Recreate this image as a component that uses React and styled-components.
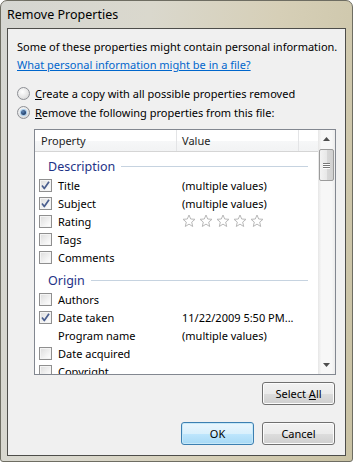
import React from 'react';
import styled, { createGlobalStyle } from 'styled-components';

const Global = createGlobalStyle`
  html, body {
    margin: 0;
    background: #ffffff;
  }
  body {
    font-family: "Noto Sans", "Open Sans", sans-serif;
    font-size: 11px;
    color: #000;
  }
`;

const Frame = styled.div`
  width: 353px;
  height: 462px;
  box-sizing: border-box;
  display: flex;
  flex-direction: column;
  padding: 0 6px 5px 6px;
  border: 1px solid #6e6d62;
  border-radius: 7px 7px 3px 3px;
  background: linear-gradient(100deg, #d5d6d2 0%, #dad8cd 35%, #d6cfb7 65%, #c9c2a4 100%);
`;

const TitleBar = styled.div`
  height: 27px;
  display: flex;
  align-items: center;
  font-size: 12.5px;
  padding-bottom: 1px;
  box-sizing: border-box;
`;

const Client = styled.div`
  flex: 1;
  border: 1px solid #4d4d4a;
  background: #f0f0f0;
  padding: 9px 9px 0 9px;
  display: flex;
  flex-direction: column;
`;

const Line = styled.div`
  line-height: 18px;
  white-space: nowrap;
`;

const Link = styled.a`
  color: #0066cc;
  text-decoration: underline;
  line-height: 18px;
  white-space: nowrap;
`;

const RadioGroup = styled.div`
  margin-top: 10px;
  display: flex;
  flex-direction: column;
`;

const RadioRow = styled.label`
  height: 19px;
  display: flex;
  align-items: center;
  gap: 5px;
  white-space: nowrap;
`;

const RadioCircle = styled.span`
  width: 13px;
  height: 13px;
  box-sizing: border-box;
  border-radius: 50%;
  border: 1px solid #8d8f94;
  background: radial-gradient(circle at 40% 35%, #ffffff 0%, #e6e6e6 55%, #cfcfcf 100%);
  display: flex;
  align-items: center;
  justify-content: center;
  &::after {
    content: '';
    display: ${(p) => (p.checked ? 'block' : 'none')};
    width: 5px;
    height: 5px;
    border-radius: 50%;
    background: radial-gradient(circle at 40% 35%, #5d86b6 0%, #1d3d6a 70%);
    box-shadow: 0 0 1px 1px #9cc6ea;
  }
`;

const U = styled.span`
  text-decoration: underline;
`;

const ListBox = styled.div`
  margin: 7px 0 0 17px;
  width: 302px;
  height: 246px;
  box-sizing: border-box;
  border: 1px solid #828790;
  background: #fff;
  display: flex;
  overflow: hidden;
`;

const ListMain = styled.div`
  flex: 1;
  display: flex;
  flex-direction: column;
  overflow: hidden;
`;

const Header = styled.div`
  height: 21px;
  flex: none;
  display: grid;
  grid-template-columns: 142px 122px 1fr;
  background: linear-gradient(#ffffff, #ffffff 50%, #f6f7f8 51%, #f2f3f4);
  border-bottom: 1px solid #d5d5d5;
`;

const HeaderCell = styled.div`
  display: flex;
  align-items: center;
  padding-left: ${(p) => p.pad}px;
  border-right: ${(p) => (p.last ? 'none' : '1px solid #e3e4e6')};
  color: #1e1e1e;
`;

const Group = styled.div`
  margin-top: 4px;
  height: 20px;
  flex: none;
  display: flex;
  align-items: center;
  padding-left: 13px;
  padding-right: 10px;
  gap: 6px;
  color: #1e3287;
  font-size: 12.5px;
  &::after {
    content: '';
    flex: 1;
    height: 1px;
    background: #c6d3e0;
  }
`;

const Row = styled.div`
  height: 18px;
  flex: none;
  display: grid;
  grid-template-columns: 147px 1fr;
  align-items: center;
  white-space: nowrap;
`;

const NameCell = styled.div`
  display: flex;
  align-items: center;
  padding-left: 4px;
  gap: 6px;
`;

const Box = styled.span`
  width: 13px;
  height: 13px;
  flex: none;
  box-sizing: border-box;
  border: 1px solid #8f8f8f;
  background: linear-gradient(135deg, #dcdcdc, #f6f6f6 70%, #ffffff);
  box-shadow: inset 0 0 0 1px #f4f4f4;
  display: flex;
  align-items: center;
  justify-content: center;
  visibility: ${(p) => (p.hidden ? 'hidden' : 'visible')};
`;

const ScrollBar = styled.div`
  width: 17px;
  flex: none;
  display: flex;
  flex-direction: column;
  background: linear-gradient(90deg, #e6e6e6, #f7f7f7 20%, #f7f7f7 80%, #ececec);
`;

const ArrowBtn = styled.div`
  height: 18px;
  flex: none;
  display: flex;
  align-items: center;
  justify-content: center;
`;

const Track = styled.div`
  flex: 1;
  padding: 1px 1px 0 1px;
`;

const Thumb = styled.div`
  height: 32px;
  box-sizing: border-box;
  border: 1px solid #9b9b9b;
  border-radius: 2px;
  background: linear-gradient(90deg, #f3f3f3, #e8e8e8 50%, #d8d8d8 51%, #d0d0d0);
  display: flex;
  flex-direction: column;
  align-items: center;
  justify-content: center;
  gap: 1px;
`;

const Grip = styled.span`
  width: 7px;
  height: 1px;
  background: #777;
  box-shadow: 0 1px 0 #fff;
`;

const Stars = styled.div`
  display: flex;
  gap: 3px;
`;

const Footer = styled.div`
  display: flex;
  justify-content: flex-end;
  gap: 8px;
  margin-right: 1px;
  margin-top: ${(p) => p.top}px;
`;

const Button = styled.button`
  width: 73px;
  height: 23px;
  box-sizing: border-box;
  font-family: inherit;
  font-size: 11px;
  color: #000;
  border-radius: 3px;
  border: 1px solid ${(p) => (p.primary ? '#3c7fb1' : '#707070')};
  background: ${(p) =>
    p.primary
      ? 'linear-gradient(#eaf6fd, #d9f0fc 50%, #bee6fd 51%, #a7d9f5)'
      : 'linear-gradient(#f2f2f2, #ebebeb 50%, #dddddd 51%, #cfcfcf)'};
  box-shadow: inset 0 0 0 1px ${(p) => (p.primary ? '#c6e8f8' : '#fcfcfc')};
  padding: 0;
`;

const Check = () => (
  <svg width="9" height="9" viewBox="0 0 9 9">
    <path d="M1 4.5 L3.3 7.5 L8 0.8" fill="none" stroke="#4a5e8e" strokeWidth="1.7" strokeLinejoin="round" />
  </svg>
);

const Star = () => (
  <svg width="14" height="14" viewBox="0 0 14 14">
    <path
      d="M7 1 L8.7 5 L13 5.3 L9.7 8.1 L10.7 12.5 L7 10.1 L3.3 12.5 L4.3 8.1 L1 5.3 L5.3 5 Z"
      fill="#fff"
      stroke="#b8b8b8"
      strokeWidth="1"
      strokeLinejoin="round"
    />
  </svg>
);

const Arrow = ({ down }) => (
  <svg width="7" height="4" viewBox="0 0 7 4">
    <path d={down ? 'M0 0 L7 0 L3.5 4 Z' : 'M0 4 L7 4 L3.5 0 Z'} fill="#4d4d4d" />
  </svg>
);

const groups = [
  {
    name: 'Description',
    rows: [
      { name: 'Title', checked: true, value: '(multiple values)' },
      { name: 'Subject', checked: true, value: '(multiple values)' },
      { name: 'Rating', stars: true },
      { name: 'Tags' },
      { name: 'Comments' },
    ],
  },
  {
    name: 'Origin',
    rows: [
      { name: 'Authors' },
      { name: 'Date taken', checked: true, value: '11/22/2009 5:50 PM...' },
      { name: 'Program name', nobox: true, value: '(multiple values)' },
      { name: 'Date acquired' },
      { name: 'Copyright' },
    ],
  },
];

const App = () => {
  return (
    <>
      <Global />
      <Frame>
        <TitleBar>Remove Properties</TitleBar>
        <Client>
          <Line>Some of these properties might contain personal information.</Line>
          <Line>
            <Link href="#">What personal information might be in a file?</Link>
          </Line>
          <RadioGroup>
            <RadioRow>
              <RadioCircle />
              <span><U>C</U>reate a copy with all possible properties removed</span>
            </RadioRow>
            <RadioRow>
              <RadioCircle checked />
              <span><U>R</U>emove the following properties from this file:</span>
            </RadioRow>
          </RadioGroup>
          <ListBox>
            <ListMain>
              <Header>
                <HeaderCell pad={6}>Property</HeaderCell>
                <HeaderCell pad={5}>Value</HeaderCell>
                <HeaderCell last />
              </Header>
              {groups.map((g) => (
                <React.Fragment key={g.name}>
                  <Group>{g.name}</Group>
                  {g.rows.map((r) => (
                    <Row key={r.name}>
                      <NameCell>
                        <Box hidden={r.nobox}>{r.checked && <Check />}</Box>
                        <span>{r.name}</span>
                      </NameCell>
                      <div>
                        {r.stars ? (
                          <Stars>
                            {[0, 1, 2, 3, 4].map((i) => (
                              <Star key={i} />
                            ))}
                          </Stars>
                        ) : (
                          r.value
                        )}
                      </div>
                    </Row>
                  ))}
                </React.Fragment>
              ))}
            </ListMain>
            <ScrollBar>
              <ArrowBtn>
                <Arrow />
              </ArrowBtn>
              <Track>
                <Thumb>
                  <Grip />
                  <Grip />
                  <Grip />
                </Thumb>
              </Track>
              <ArrowBtn>
                <Arrow down />
              </ArrowBtn>
            </ScrollBar>
          </ListBox>
          <Footer top={7}>
            <Button>
              Select <U>A</U>ll
            </Button>
          </Footer>
          <Footer top={17}>
            <Button primary>OK</Button>
            <Button>Cancel</Button>
          </Footer>
        </Client>
      </Frame>
    </>
  );
};

export default App;
